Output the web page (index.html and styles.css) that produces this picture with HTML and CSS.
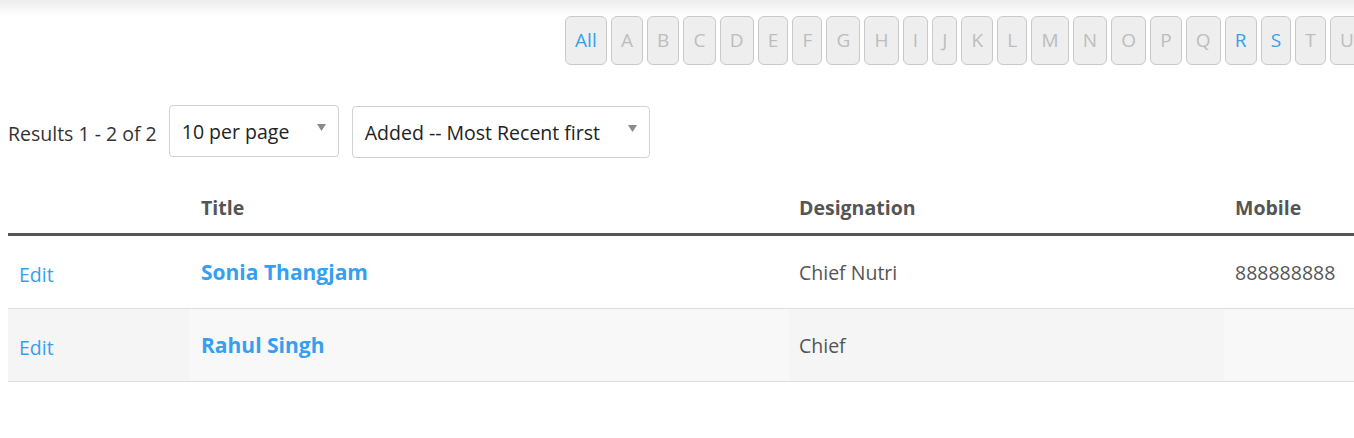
FILE: index.html
```html
<!DOCTYPE html>
<html>
<head>
<meta charset="utf-8">
<link rel="stylesheet" href="styles.css">
</head>
<body>
<div class="topshade"></div>
<div class="page">
  <div class="letters">
    <span class="letter active">All</span>
    <span class="letter">A</span>
    <span class="letter">B</span>
    <span class="letter">C</span>
    <span class="letter">D</span>
    <span class="letter">E</span>
    <span class="letter">F</span>
    <span class="letter">G</span>
    <span class="letter">H</span>
    <span class="letter">I</span>
    <span class="letter">J</span>
    <span class="letter">K</span>
    <span class="letter">L</span>
    <span class="letter">M</span>
    <span class="letter">N</span>
    <span class="letter">O</span>
    <span class="letter">P</span>
    <span class="letter">Q</span>
    <span class="letter active">R</span>
    <span class="letter active">S</span>
    <span class="letter">T</span>
    <span class="letter">U</span>
  </div>

  <div class="results">
    <span class="count">Results 1 - 2 of 2</span>
    <div class="select per-page">
      <span>10 per page</span>
      <svg class="caret" width="9" height="7" viewBox="0 0 9 7"><path d="M0 0H9L4.5 7Z" fill="#8a8a8a"/></svg>
    </div>
    <div class="select sort">
      <span>Added -- Most Recent first</span>
      <svg class="caret" width="9" height="7" viewBox="0 0 9 7"><path d="M0 0H9L4.5 7Z" fill="#8a8a8a"/></svg>
    </div>
  </div>

  <table class="grid">
    <thead>
      <tr>
        <th class="c-edit"></th>
        <th class="c-title">Title</th>
        <th class="c-desig">Designation</th>
        <th class="c-mobile">Mobile</th>
      </tr>
    </thead>
    <tbody>
      <tr>
        <td class="c-edit"><a class="edit">Edit</a></td>
        <td class="c-title"><a class="name">Sonia Thangjam</a></td>
        <td class="c-desig">Chief Nutri</td>
        <td class="c-mobile">888888888</td>
      </tr>
      <tr class="alt">
        <td class="c-edit"><a class="edit">Edit</a></td>
        <td class="c-title"><a class="name">Rahul Singh</a></td>
        <td class="c-desig">Chief</td>
        <td class="c-mobile"></td>
      </tr>
    </tbody>
  </table>
</div>
</body>
</html>
```

FILE: styles.css
```css
html, body {
  margin: 0;
  padding: 0;
  background: #fff;
  overflow: hidden;
}
body {
  font-family: "Open Sans", "Liberation Sans", sans-serif;
  color: #333;
}
.topshade {
  height: 16px;
  background: linear-gradient(#ececec, #ffffff);
}
.page {
  padding: 0 0 0 8px;
}
.letters {
  display: flex;
  gap: 4px;
  padding-left: 557px;
  white-space: nowrap;
  width: 1400px;
}
.letter {
  flex: none;
  box-sizing: border-box;
  height: 49px;
  line-height: 47px;
  padding: 0 9.1px;
  border: 1px solid #c9c9c9;
  border-radius: 6px;
  background: #eeeeee;
  color: #bdbdbd;
  font-size: 19px;
  text-align: center;
}
.letter.active {
  color: #379ff0;
}
.results {
  display: flex;
  align-items: center;
  margin-top: 40px;
  height: 53px;
}
.count {
  font-size: 19.5px;
  color: #333;
  margin-right: 12px;
  margin-top: 4px;
}
.select {
  box-sizing: border-box;
  display: flex;
  align-items: center;
  justify-content: space-between;
  height: 52px;
  padding: 0 12px 0 12px;
  border: 1px solid #d2d2d2;
  border-radius: 4px;
  font-size: 19.5px;
  color: #222;
  background: #fff;
}
.select span {
  margin-top: 1px;
}
.select .caret {
  margin-top: -8px;
}
.per-page {
  width: 170px;
  align-self: flex-start;
}
.sort {
  width: 298px;
  margin-left: 13px;
  align-self: flex-end;
}
.grid {
  border-collapse: collapse;
  margin-top: 28px;
  width: 1420px;
  table-layout: fixed;
}
.grid th {
  text-align: left;
  font-size: 19.5px;
  font-weight: 700;
  color: #555;
  padding: 10px 11px 13px;
  line-height: 24px;
  border-bottom: 3px solid #555;
}
.grid td {
  padding: 23px 11px 22px;
  line-height: 27px;
  font-size: 19.5px;
  color: #555;
  border-bottom: 1px solid #dedede;
  vertical-align: middle;
}
.c-edit { width: 160px; }
.c-title { width: 577px; }
.c-desig { width: 414px; }
.grid td.c-desig { padding-left: 10px; }
.grid th.c-desig { padding-left: 10px; }
.edit {
  color: #379ff0;
  font-size: 19.5px;
  position: relative;
  top: 2px;
}
.name {
  color: #379ff0;
  font-weight: 700;
  font-size: 21px;
}
.alt td { background: #f8f8f8; }
.alt td.c-edit, .alt td.c-desig { background: #f5f5f5; }
```
